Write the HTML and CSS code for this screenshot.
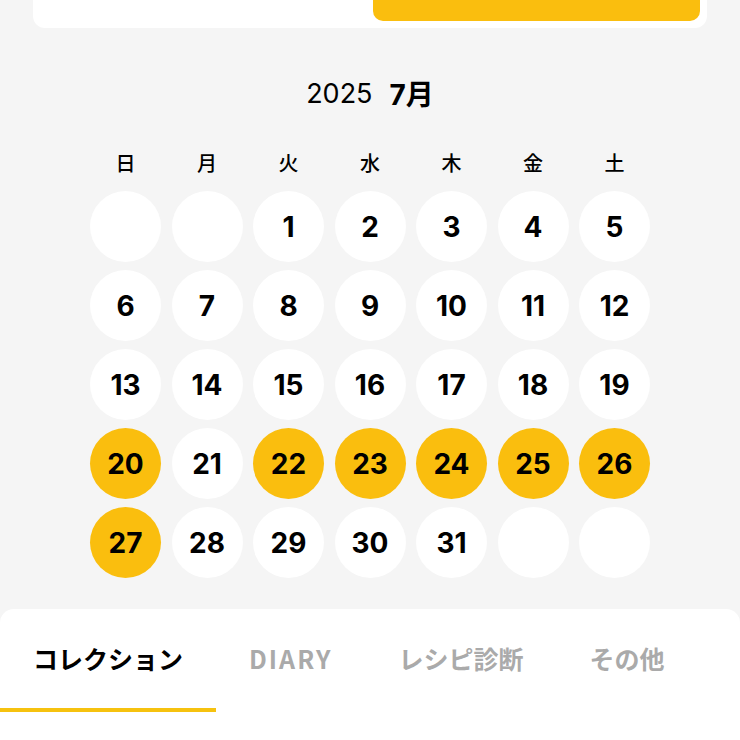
FILE: index.html
```html
<!DOCTYPE html>
<html>

<head>
  <meta charset="UTF-8">
  <title>カレンダー</title>
  <link rel="stylesheet" href="styles.css">
</head>

<body>
  <!-- view switch (scrolled partly off the top) -->
  <div class="switch">
    <div class="switch-item">リスト</div>
    <div class="switch-item active">カレンダー</div>
  </div>

  <h2 class="month"><span class="year">2025</span><span class="mon">7月</span></h2>

  <div class="calendar">
    <div class="week">日</div>
    <div class="week">月</div>
    <div class="week">火</div>
    <div class="week">水</div>
    <div class="week">木</div>
    <div class="week">金</div>
    <div class="week">土</div>

    <div class="day"></div>
    <div class="day"></div>
    <div class="day">1</div>
    <div class="day">2</div>
    <div class="day">3</div>
    <div class="day">4</div>
    <div class="day">5</div>

    <div class="day">6</div>
    <div class="day">7</div>
    <div class="day">8</div>
    <div class="day">9</div>
    <div class="day">10</div>
    <div class="day">11</div>
    <div class="day">12</div>

    <div class="day">13</div>
    <div class="day">14</div>
    <div class="day">15</div>
    <div class="day">16</div>
    <div class="day">17</div>
    <div class="day">18</div>
    <div class="day">19</div>

    <div class="day done">20</div>
    <div class="day">21</div>
    <div class="day done">22</div>
    <div class="day done">23</div>
    <div class="day done">24</div>
    <div class="day done">25</div>
    <div class="day done">26</div>

    <div class="day done">27</div>
    <div class="day">28</div>
    <div class="day">29</div>
    <div class="day">30</div>
    <div class="day">31</div>
    <div class="day"></div>
    <div class="day"></div>
  </div>

  <div class="panel">
    <ul class="tabs">
      <li class="tab active">コレクション</li>
      <li class="tab latin">DIARY</li>
      <li class="tab">レシピ診断</li>
      <li class="tab">その他</li>
    </ul>
  </div>
</body>

</html>
```

FILE: styles.css
```css
body {
  font-family: Inter, "Noto Sans CJK JP", sans-serif;
  background-color: #f5f5f5;
  color: #000;
  margin: 0;
  padding: 0;
  height: 740px;
  overflow: hidden;
}

/* top switch */
.switch {
  margin: -32px 33px 0;
  height: 46px;
  padding: 7px;
  background-color: #fff;
  border-radius: 12px;
  display: grid;
  grid-template-columns: 1fr 1fr;
  gap: 6px;
}

.switch-item {
  display: flex;
  align-items: center;
  justify-content: center;
  font-family: "Noto Sans CJK JP", sans-serif;
  font-size: 18px;
  font-weight: bold;
  border-radius: 10px;
  padding-bottom: 17px;
}

.switch-item.active {
  background-color: #fabe0e;
}

/* month title */
.month {
  margin: 0;
  padding-top: 48px;
  height: 34px;
  display: flex;
  justify-content: center;
  align-items: center;
  gap: 17px;
  font-weight: normal;
}

.year {
  font-size: 27px;
}

.mon {
  font-size: 28px;
  font-weight: bold;
}

/* calendar grid */
.calendar {
  margin-top: 41px;
  display: grid;
  grid-template-columns: repeat(7, 71px);
  column-gap: 10.5px;
  row-gap: 8px;
  justify-content: center;
}

.week {
  text-align: center;
  font-family: "Noto Sans CJK JP", sans-serif;
  font-size: 20px;
  font-weight: 500;
  height: 24px;
  line-height: 24px;
  margin-bottom: 8px;
}

.day {
  width: 71px;
  height: 71px;
  border-radius: 50%;
  background-color: #fff;
  display: flex;
  align-items: center;
  justify-content: center;
  font-size: 28px;
  font-weight: bold;
}

.day.done {
  background-color: #fabe0e;
}

/* bottom tabs */
.panel {
  margin-top: 31px;
  background-color: #fff;
  border-radius: 14px 14px 0 0;
  height: 200px;
}

.tabs {
  list-style-type: none;
  margin: 0;
  padding: 0;
  display: flex;
}

.tab {
  padding: 32px 33px 0;
  height: 67px;
  line-height: 34px;
  font-family: "Noto Sans CJK JP", sans-serif;
  font-size: 25px;
  font-weight: bold;
  color: #aaa;
  border-bottom: 4px solid transparent;
}

.tab.latin {
  letter-spacing: 2px;
}

.tab.active {
  color: #000;
  border-bottom-color: #f6c20f;
}
```
